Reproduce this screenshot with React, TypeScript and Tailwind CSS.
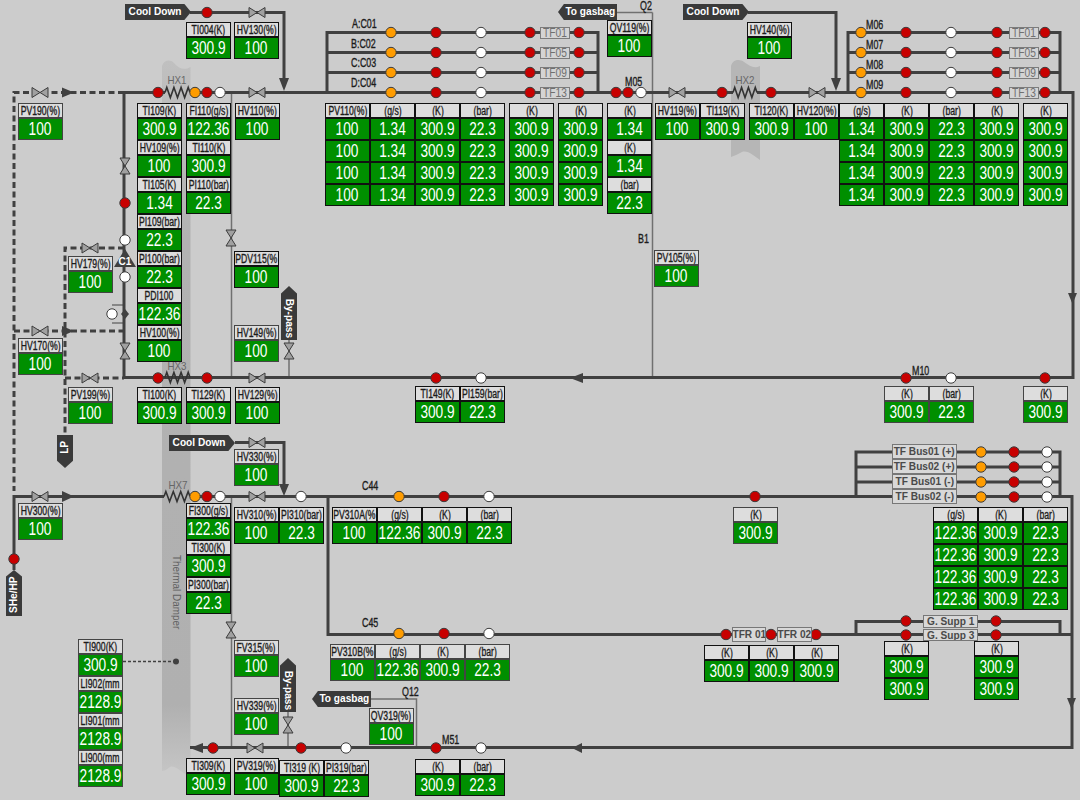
import React from "react";

type Item = [string, string[]];
// x, y, gap class between columns, columns of stacked tags, softer border
type Cluster = [number, number, string, Item[][], boolean?];
type FlagDef = [number, number, number, number, string, "right" | "left" | "up" | "down", string];

const GS = "1.34";
const K = "300.9";
const BAR = "22.3";
const FLOW = "122.36";
const PCT = "100";
const MM = "2128.9";

const four = (v: string) => [v, v, v, v];
const one = (label: string, v: string): Item[] => [[label, [v]]];

const CLUSTERS: Cluster[] = [
  [18, 103, "gap-0", [one("PV190(%)", PCT)], true],
  [186, 22, "gap-[3px]", [one("TI004(K)", K), one("HV130(%)", PCT)]],
  [
    137, 103, "gap-1",
    [
      [
        ["TI109(K)", [K]], ["HV109(%)", [PCT]], ["TI105(K)", [GS]], ["PI109(bar)", [BAR]],
        ["PI100(bar)", [BAR]], ["PDI100", [FLOW]], ["HV100(%)", [PCT]],
      ],
      [["FI110(g/s)", [FLOW]], ["TI110(K)", [K]], ["PI110(bar)", [BAR]]],
      one("HV110(%)", PCT),
    ],
  ],
  [68, 256, "gap-0", [one("HV179(%)", PCT)], true],
  [18, 338, "gap-0", [one("HV170(%)", PCT)], true],
  [234, 251, "gap-0", [one("PDV115(%", PCT)]],
  [234, 325, "gap-0", [one("HV149(%)", PCT)], true],
  [68, 387, "gap-0", [one("PV199(%)", PCT)], true],
  [137, 387, "gap-1", [one("TI100(K)", K), one("TI129(K)", K), one("HV129(%)", PCT)]],
  [
    325, 103, "gap-0",
    [
      [["PV110(%)", four(PCT)]], [["(g/s)", four(GS)]], [["(K)", four(K)]], [["(bar)", four(BAR)]],
    ],
  ],
  [
    509, 103, "gap-1",
    [
      [["(K)", four(K)]], [["(K)", four(K)]],
      [["(K)", [GS]], ["(K)", [GS]], ["(bar)", [BAR]]],
    ],
  ],
  [607, 20, "gap-0", [one("QV119(%)", PCT)]],
  [655, 103, "gap-0", [one("HV119(%)", PCT), one("TI119(K)", K)]],
  [
    749, 103, "gap-0",
    [
      one("TI120(K)", K), one("HV120(%)", PCT),
      [["(g/s)", four(GS)]], [["(K)", four(K)]], [["(bar)", four(BAR)]], [["(K)", four(K)]],
    ],
  ],
  [1023, 103, "gap-0", [[["(K)", four(K)]]]],
  [747, 22, "gap-0", [one("HV140(%)", PCT)]],
  [654, 250, "gap-0", [one("PV105(%)", PCT)], true],
  [415, 386, "gap-0", [one("TI149(K)", K), one("PI159(bar)", BAR)]],
  [884, 386, "gap-0", [one("(K)", K), one("(bar)", BAR)], true],
  [1023, 386, "gap-0", [one("(K)", K)], true],
  [234, 449, "gap-0", [one("HV330(%)", PCT)], true],
  [18, 503, "gap-0", [one("HV300(%)", PCT)], true],
  [186, 503, "gap-0", [[["FI300(g/s)", [FLOW]], ["TI300(K)", [K]], ["PI300(bar)", [BAR]]]]],
  [234, 507, "gap-0", [one("HV310(%)", PCT), one("PI310(bar)", BAR)]],
  [332, 507, "gap-0", [one("PV310A(%", PCT), one("(g/s)", FLOW), one("(K)", K), one("(bar)", BAR)]],
  [733, 507, "gap-0", [one("(K)", K)], true],
  [933, 507, "gap-0", [[["(g/s)", four(FLOW)]], [["(K)", four(K)]], [["(bar)", four(BAR)]]]],
  [330, 644, "gap-0", [one("PV310B(%", PCT), one("(g/s)", FLOW), one("(K)", K), one("(bar)", BAR)], true],
  [704, 645, "gap-0", [one("(K)", K), one("(K)", K), one("(K)", K)]],
  [884, 641, "gap-0", [[["(K)", [K, K]]]]],
  [974, 641, "gap-0", [[["(K)", [K, K]]]]],
  [234, 640, "gap-0", [one("FV315(%)", PCT)], true],
  [234, 698, "gap-0", [one("HV339(%)", PCT)], true],
  [78, 639, "gap-0", [[["TI900(K)", [K]], ["LI902(mm", [MM]], ["LI901(mm", [MM]], ["LI900(mm", [MM]]]], true],
  [369, 708, "gap-0", [one("QV319(%)", PCT)], true],
  [186, 758, "gap-[3px]", [one("TI309(K)", K), one("PV319(%)", PCT)]],
  [279, 760, "gap-0", [one("TI319 (K)", K), one("PI319(bar)", BAR)]],
  [415, 759, "gap-0", [one("(K)", K), one("(bar)", BAR)]],
];

const FLAGS: FlagDef[] = [
  [125, 4, 66, 16, "Cool Down", "right", "pr-[6px]"],
  [683, 4, 66, 16, "Cool Down", "right", "pr-[6px]"],
  [169, 435, 66, 16, "Cool Down", "right", "pr-[6px]"],
  [558, 4, 59, 16, "To gasbag", "left", "pl-[6px]"],
  [312, 691, 59, 16, "To gasbag", "left", "pl-[6px]"],
  [57, 435, 16, 33, "LP", "down", "pb-2"],
  [281, 286, 16, 54, "By-pass", "up", "pt-[10px]"],
  [280, 658, 16, 54, "By-pass", "up", "pt-[10px]"],
  [6, 570, 16, 46, "SHe/HP", "up", "pt-1"],
];

const NOTES: [number, number, string][] = [
  [352, 24, "A:C01"], [351, 44, "B:C02"], [351, 63, "C:C03"], [351, 83, "D:C04"],
  [625, 82, "M05"], [640, 6, "Q2"], [638, 239, "B1"],
  [866, 25, "M06"], [866, 45, "M07"], [866, 65, "M08"], [866, 85, "M09"],
  [912, 371, "M10"], [362, 486, "C44"], [362, 623, "C45"],
  [402, 692, "Q12"], [442, 740, "M51"],
];

const HX: [number, number, string][] = [
  [177, 80, "HX1"], [745, 80, "HX2"], [177, 366, "HX3"], [178, 485, "HX7"],
];

const TF_NAMES = ["TF01", "TF05", "TF09", "TF13"];
const TF_BUS = ["TF Bus01 (+)", "TF Bus02 (+)", "TF Bus01 (-)", "TF Bus02 (-)"];

const RED = "#c80000";
const ORG = "#ff9c00";
const WHT = "#ffffff";

const rowDots = (y: number, xs: [number, string][]) => xs.map(([x, c]) => [x, y, c] as [number, number, string]);

const DOTS: [number, number, string][] = [
  [207, 12.5, RED],
  ...rowDots(92.5, [[158, RED], [195, ORG], [207, RED], [220, WHT], [616, RED], [628, RED], [641, WHT], [722, RED], [771, RED]]),
  ...[32.5, 52.5, 72.5, 92.5].flatMap((y) =>
    rowDots(y, [[391, ORG], [436, RED], [481, WHT], [530, RED], [579, RED], [861, ORG], [906, RED], [951, WHT], [997, RED], [1045, RED]])
  ),
  [125, 203, RED], [125, 240, WHT], [125, 277, WHT], [112, 314, WHT],
  ...rowDots(378, [[158, RED], [207, RED], [436, RED], [481, WHT], [906, RED], [951, WHT], [1045, RED]]),
  ...rowDots(496.5, [[195, ORG], [207, RED], [220, WHT], [301, WHT], [399, ORG], [444, RED], [489, WHT], [755, RED]]),
  ...[452, 467, 482, 497].flatMap((y) => rowDots(y, [[981, ORG], [1014, RED], [1047, WHT]])),
  [14, 559, RED],
  ...rowDots(633.5, [[399, ORG], [444, RED], [489, WHT]]),
  ...rowDots(634.5, [[726, RED], [771, RED], [816, RED]]),
  [906, 621, RED], [996, 621, RED], [906, 635, RED], [996, 635, RED],
  ...rowDots(748, [[213, RED], [301, RED], [346, WHT], [436, RED], [481, WHT]]),
];

const VALVES: [number, number, boolean?][] = [
  [40, 92.5], [257, 12.5], [257, 92.5], [677, 92.5], [817, 92.5], [125, 166, true], [125, 351, true],
  [231, 238, true], [90, 248], [40, 331], [90, 378], [257, 378], [289, 351, true],
  [257, 442.5], [40, 496.5], [257, 496.5], [231, 630, true], [288, 725, true], [255, 748],
];

// pipe segments as svg path data
const PIPES =
  "M124 92.5H165M190 92.5H733M757 92.5H1073V377.5H124V92.5" +
  "M327 92.5V32.5H598V92.5M327 52.5H598M327 72.5H598" +
  "M848 92.5V32.5H1060V92.5M848 52.5H1060M848 72.5H1060" +
  "M190 12.5H284V80M748 12.5H836V80" +
  "M14 570V496.5H164M190 496.5H1072V747.5H190M235 442.5H284V486" +
  "M856 496.5V452H1060V496.5M856 467H1060M856 482H1060" +
  "M328 496.5V634.5H1071" +
  "M856 634.5V621.5H1060V634.5";

const THIN =
  "M231.5 92V378M289 340V378M652.5 12.5H616M652.5 12.5V378M231.5 497V748M288 712V748M370 699H416.5V748M112 305H124M112 323H124";

const DASHED = "M124 92.5H14V491M14 331H124M124 248H65V436M65 378H124";

const zigzag = (x0: number, x1: number, y: number) => {
  const n = 7;
  const step = (x1 - x0) / n;
  let d = `M${x0} ${y}`;
  for (let i = 0; i < n; i++) {
    d += `L${x0 + step * (i + 0.5)} ${y + (i % 2 ? 5 : -5)}`;
  }
  return d + `L${x1} ${y}`;
};

const Valve = ({ x, y, vertical }: { x: number; y: number; vertical?: boolean }) => (
  <g transform={`translate(${x} ${y})${vertical ? " rotate(90)" : ""}`} fill="#a0a0a0" stroke="#3c3c3c" strokeWidth="1">
    <polygon points="-8,-5 0,0 -8,5" />
    <polygon points="8,-5 0,0 8,5" />
  </g>
);

const Tag = ({ label, values, soft }: { label: string; values: string[]; soft?: boolean }) => {
  const edge = soft ? "border-[#444444]" : "border-[#111111]";
  return (
    <div className="flex w-[45px] flex-col">
      <div className={`flex h-[15px] items-center justify-center overflow-hidden border bg-[#dddddd] text-[12px] leading-none text-[#1c1c1c] [-webkit-text-stroke:0.35px_#1c1c1c] ${edge}`}>
        <span className="inline-block shrink-0 scale-x-[0.72] whitespace-nowrap">{label}</span>
      </div>
      {values.map((v, i) => (
        <div key={i} className={`flex h-[22px] items-center justify-center overflow-hidden border bg-[#008f00] text-[18px] leading-none text-white ${edge}`}>
          <span className="inline-block shrink-0 scale-x-[0.76] whitespace-nowrap">{v}</span>
        </div>
      ))}
    </div>
  );
};

const TagCluster = ({ def }: { def: Cluster }) => {
  const [x, y, gap, columns, soft] = def;
  return (
    <div className={`absolute flex items-start ${gap}`} style={{ left: x, top: y }}>
      {columns.map((col, i) => (
        <div key={i} className="flex flex-col">
          {col.map(([label, values], j) => (
            <Tag key={j} label={label} values={values} soft={soft} />
          ))}
        </div>
      ))}
    </div>
  );
};

const flagShape = {
  right: "[clip-path:polygon(0_0,90%_0,100%_50%,90%_100%,0_100%)]",
  left: "[clip-path:polygon(10%_0,100%_0,100%_100%,10%_100%,0_50%)]",
  up: "[clip-path:polygon(50%_0,100%_14%,100%_100%,0_100%,0_14%)]",
  down: "[clip-path:polygon(0_0,100%_0,100%_78%,50%_100%,0_78%)]",
};

const Flag = ({ def }: { def: FlagDef }) => {
  const [x, y, w, h, text, dir, pad] = def;
  const flipped = text === "LP" || text === "SHe/HP";
  const sideways = dir === "up" || dir === "down";
  return (
    <div
      className={`absolute flex items-center justify-center bg-[#3a3a3a] text-[11.5px] leading-none font-bold text-white ${pad} ${flagShape[dir]}`}
      style={{ left: x, top: y, width: w, height: h }}
    >
      {sideways ? (
        <span className={`inline-block shrink-0 scale-y-[0.88] whitespace-nowrap [writing-mode:vertical-rl] ${flipped ? "rotate-180" : ""}`}>{text}</span>
      ) : (
        <span className="inline-block shrink-0 scale-x-[0.88] whitespace-nowrap">{text}</span>
      )}
    </div>
  );
};

const SmallTf = ({ name }: { name: string }) => (
  <div className="flex h-[12px] w-[30px] items-center justify-center border border-[#7c7c7c] bg-[#d4d4d4] text-[12px] leading-none text-[#707070]">
    <span className="inline-block scale-x-[0.85]">{name}</span>
  </div>
);

const BigBox = ({ name, className }: { name: string; className: string }) => (
  <div className={`flex items-center justify-center overflow-hidden border border-[#777777] bg-[#d8d8d8] text-[11px] leading-none font-bold whitespace-nowrap text-[#4a4a4a] ${className}`}>
    <span className="inline-block shrink-0 scale-x-[0.92]">{name}</span>
  </div>
);

export default function App() {
  return (
    <div className="relative h-[800px] w-[1080px] overflow-hidden bg-[#cccccc] font-['Liberation_Sans',Arial,sans-serif]">
      <svg className="absolute inset-0" width="1080" height="800" viewBox="0 0 1080 800">
        <defs>
          <linearGradient id="damper" x1="0" y1="60" x2="0" y2="776" gradientUnits="userSpaceOnUse">
            <stop offset="0" stopColor="#c0c0c0" />
            <stop offset="0.25" stopColor="#b2b2b2" />
            <stop offset="0.9" stopColor="#b0b0b0" />
            <stop offset="1" stopColor="#c6c6c6" />
          </linearGradient>
        </defs>
        <path d="M162 66C164 60 170 59 174 63C178 68 184 71 190.5 67V776C184 776 176 764 170 767C166 770 164 771 162 771Z" fill="url(#damper)" />
        <path d="M731 66C733 59 740 59 744 62C750 66 754 69 760 66V160C754 156 748 150 742 152C738 154 734 156 731 157Z" fill="#b6b6b6" />

        <path d={THIN} fill="none" stroke="#707070" strokeWidth="1.5" />
        <path d={DASHED} fill="none" stroke="#404040" strokeWidth="3" strokeDasharray="6 3.5" />
        <path d={PIPES} fill="none" stroke="#404040" strokeWidth="3" />
        <path d={zigzag(165, 190, 92.5)} fill="none" stroke="#333333" strokeWidth="1.6" />
        <path d={zigzag(733, 757, 92.5)} fill="none" stroke="#333333" strokeWidth="1.6" />
        <path d={zigzag(165, 190, 377.5)} fill="none" stroke="#333333" strokeWidth="1.6" />
        <path d={zigzag(164, 190, 496.5)} fill="none" stroke="#333333" strokeWidth="1.6" />

        {/* flow arrows */}
        <g fill="#404040">
          <polygon points="62,87.5 74,92.5 62,97.5" />
          <polygon points="62,326 74,331 62,336" />
          <polygon points="62,491 74,496.5 62,502" />
          <polygon points="279,78 289,78 284,91" />
          <polygon points="831,78 841,78 836,91" />
          <polygon points="279,484 289,484 284,496" />
          <polygon points="1068,293 1077,293 1072.5,304" />
          <polygon points="1067,698 1076,698 1071.5,709" />
          <polygon points="570,378 583,373 583,383" />
          <polygon points="572,748 582,743 582,753" />
          <polygon points="190,748 203,743 203,753" />
          <polygon points="125,249 136,267 114,267" />
          <polygon points="125,309 129,314 125,319 121,314" />
          <circle cx="176" cy="661.5" r="3" />
        </g>
        <path d="M123 661.5H175" fill="none" stroke="#404040" strokeWidth="1.6" strokeDasharray="3 2" />

        {VALVES.map(([x, y, v], i) => (
          <Valve key={i} x={x} y={y} vertical={v} />
        ))}
        {DOTS.map(([x, y, c], i) => (
          <circle key={i} cx={x} cy={y} r="5.2" fill={c} stroke="#3c3c3c" strokeWidth="1" />
        ))}
      </svg>

      <div className="absolute left-[114px] top-[254px] flex h-[13px] w-[22px] items-end justify-center text-[10px] leading-[11px] font-bold text-white">C1</div>

      {NOTES.map(([x, y, t]) => (
        <div key={`${x}-${y}`} className="absolute h-[12px] origin-left scale-x-[0.74] text-[12px] leading-[12px] whitespace-nowrap text-[#1c1c1c] [-webkit-text-stroke:0.35px_#1c1c1c]" style={{ left: x, top: y - 6 }}>
          {t}
        </div>
      ))}

      {HX.map(([x, y, t]) => (
        <div key={t} className="absolute flex h-[12px] w-[30px] scale-x-[0.85] justify-center text-[11.5px] leading-[12px] text-[#666666]" style={{ left: x - 15, top: y - 6 }}>
          {t}
        </div>
      ))}

      <div className="absolute left-[170px] top-[555px] origin-top scale-y-[0.9] text-[11px] leading-[14px] whitespace-nowrap text-[#606060] [writing-mode:vertical-rl]">Thermal Damper</div>

      <div className="absolute left-[540px] top-[27px] flex flex-col gap-2">
        {TF_NAMES.map((n) => <SmallTf key={n} name={n} />)}
      </div>
      <div className="absolute left-[1009px] top-[27px] flex flex-col gap-2">
        {TF_NAMES.map((n) => <SmallTf key={n} name={n} />)}
      </div>
      <div className="absolute left-[892px] top-[444px] flex flex-col">
        {TF_BUS.map((n) => <BigBox key={n} name={n} className="h-[15px] w-[65px]" />)}
      </div>
      <div className="absolute left-[923px] top-[615px] flex flex-col gap-px">
        <BigBox name="G. Supp 1" className="h-[13px] w-[55px]" />
        <BigBox name="G. Supp 3" className="h-[12px] w-[55px]" />
      </div>
      <div className="absolute left-[732px] top-[627px] flex gap-[11px]">
        <BigBox name="TFR 01" className="h-[15px] w-[34px]" />
        <BigBox name="TFR 02" className="h-[15px] w-[35px]" />
      </div>

      {FLAGS.map((f, i) => (
        <Flag key={i} def={f} />
      ))}
      {CLUSTERS.map((c, i) => (
        <TagCluster key={i} def={c} />
      ))}
    </div>
  );
}
